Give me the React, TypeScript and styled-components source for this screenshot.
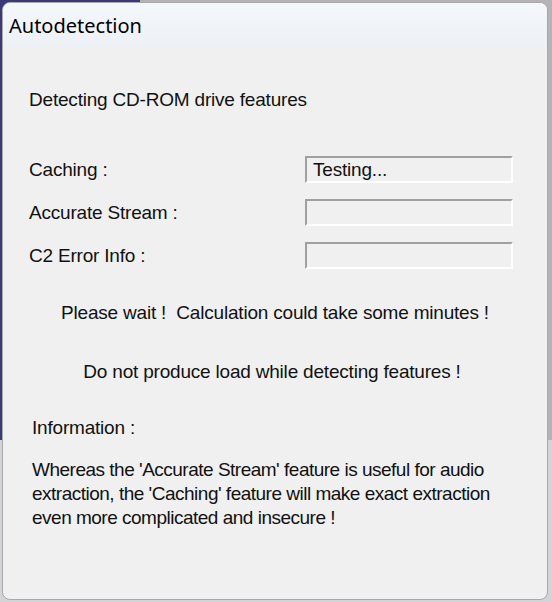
import React from "react";
import styled, { createGlobalStyle } from "styled-components";

const Global = createGlobalStyle`
  html, body { margin: 0; padding: 0; }
  body {
    width: 552px;
    height: 602px;
    overflow: hidden;
    background:
      linear-gradient(#d4d4d8, #d4d4d8) 0 440px / 100% 162px no-repeat,
      linear-gradient(90deg, #3b3a78 0px, #3b3a78 140px, #b4b4b8 140px);
  }
`;

const Window = styled.div`
  box-sizing: border-box;
  margin: 2px 4px 2px 2px;
  width: 546px;
  height: 598px;
  border-radius: 8px;
  border: 1px solid #a8a8a8;
  background: #f0f0f0;
  overflow: hidden;
  display: flex;
  flex-direction: column;
`;

const TitleBar = styled.div`
  height: 44px;
  background: linear-gradient(180deg, #f4f7fb 0%, #edf1f6 100%);
  display: flex;
  align-items: center;
  padding-left: 6px;
  box-sizing: border-box;
`;

const Title = styled.span`
  font-family: "Noto Sans", "Open Sans", sans-serif;
  font-size: 20px;
  color: #000;
`;

const Body = styled.div`
  display: flex;
  flex-direction: column;
  padding: 43px 0 0 0;
  font-family: "Liberation Sans", Arial, sans-serif;
  font-size: 19px;
  letter-spacing: -0.2px;
  color: #111;
`;

const Text = styled.div<{ $indent?: number; $top?: number }>`
  line-height: 20px;
  padding-left: ${(p) => p.$indent ?? 26}px;
  margin-top: ${(p) => p.$top ?? 0}px;
`;

const Centered = styled.div<{ $top: number; $shift?: number }>`
  line-height: 20px;
  text-align: center;
  margin-top: ${(p) => p.$top}px;
  padding-right: ${(p) => p.$shift ?? 0}px;
`;

const Rows = styled.div`
  display: flex;
  flex-direction: column;
  gap: 16px;
  margin-top: 46px;
  padding-left: 26px;
`;

const Row = styled.div`
  display: grid;
  grid-template-columns: 276px 208px;
  align-items: center;
  height: 27px;
`;

const Field = styled.div`
  box-sizing: border-box;
  height: 27px;
  border-top: 2px solid #a0a0a0;
  border-left: 2px solid #a0a0a0;
  border-bottom: 2px solid #ffffff;
  border-right: 2px solid #ffffff;
  background: #f0f0f0;
  padding-left: 6px;
  display: flex;
  align-items: center;
`;

const Paragraph = styled.div`
  line-height: 24px;
  padding-left: 29px;
  margin-top: 20px;
  letter-spacing: -0.5px;
`;

export default function App() {
  return (
    <>
      <Global />
      <Window>
        <TitleBar>
          <Title>Autodetection</Title>
        </TitleBar>
        <Body>
          <Text>Detecting CD-ROM drive features</Text>
          <Rows>
            <Row>
              <span>Caching :</span>
              <Field>Testing...</Field>
            </Row>
            <Row>
              <span>Accurate Stream :</span>
              <Field />
            </Row>
            <Row>
              <span>C2 Error Info :</span>
              <Field />
            </Row>
          </Rows>
          <Centered $top={34}>Please wait !&nbsp; Calculation could take some minutes !</Centered>
          <Centered $top={39} $shift={6}>Do not produce load while detecting features !</Centered>
          <Text $indent={29} $top={36}>Information :</Text>
          <Paragraph>
            Whereas the 'Accurate Stream' feature is useful for audio
            <br />
            extraction, the 'Caching' feature will make exact extraction
            <br />
            even more complicated and insecure !
          </Paragraph>
        </Body>
      </Window>
    </>
  );
}
